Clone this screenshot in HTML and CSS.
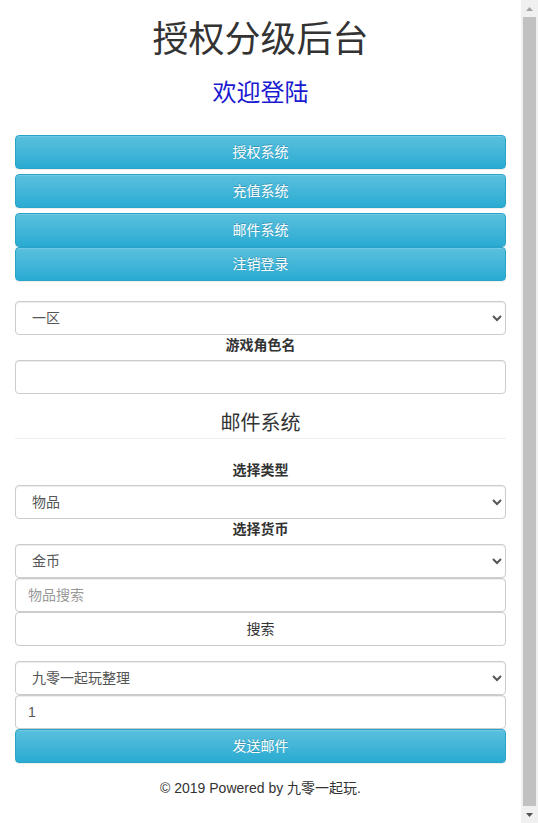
FILE: index.html
```html
<!DOCTYPE html>
<html lang="zh-CN">
<head>
  <meta charset="UTF-8" />
  <meta name="viewport" content="width=device-width, initial-scale=1.0"/>
  <title>授权分级后台</title>
  <link rel="stylesheet" href="styles.css">
</head>
<body>

  <div class="page">
    <div class="container">
      <h1 class="title">授权分级后台</h1>
      <h3 class="welcome">欢迎登陆</h3>

      <!-- Menu -->
      <div class="menu">
        <a class="btn btn-info" href="#">授权系统</a>
        <a class="btn btn-info" href="#">充值系统</a>
        <a class="btn btn-info" href="#">邮件系统</a>
        <a class="btn btn-info btn-tight" href="#">注销登录</a>
      </div>

      <!-- Mail form -->
      <form class="mail-form" onsubmit="return false">
        <select class="form-control">
          <option>一区</option>
          <option>二区</option>
        </select>
        <label>游戏角色名</label>
        <input type="text" class="form-control" />

        <h4 class="section-title">邮件系统</h4>

        <label>选择类型</label>
        <select class="form-control">
          <option>物品</option>
          <option>货币</option>
        </select>
        <label>选择货币</label>
        <select class="form-control">
          <option>金币</option>
          <option>钻石</option>
        </select>
        <input type="text" class="form-control" placeholder="物品搜索" />
        <button type="button" class="btn btn-default">搜索</button>

        <select class="form-control group-gap">
          <option>九零一起玩整理</option>
        </select>
        <input type="text" class="form-control" value="1" />
        <button type="submit" class="btn btn-info">发送邮件</button>
      </form>

      <p class="footer">© 2019 Powered by 九零一起玩.</p>
    </div>

    <!-- window scrollbar -->
    <div class="scrollbar">
      <span class="arrow">
        <svg width="7" height="4" viewBox="0 0 7 4"><path d="M0 4L3.5 0L7 4z" fill="#a3a3a3"/></svg>
      </span>
      <span class="thumb"></span>
      <span class="arrow">
        <svg width="7" height="4" viewBox="0 0 7 4"><path d="M0 0L3.5 4L7 0z" fill="#505050"/></svg>
      </span>
    </div>
  </div>

</body>
</html>
```

FILE: styles.css
```css
* {
  box-sizing: border-box;
}

body {
  margin: 0;
  font-family: "Liberation Sans", "Noto Sans CJK SC", sans-serif;
  font-size: 14px;
  line-height: 20px;
  color: #333;
  background: #fff;
}

.page {
  display: flex;
  height: 100vh;
  overflow: hidden;
}

.container {
  flex: 1;
  padding: 0 15px;
}

.scrollbar {
  width: 17px;
  display: flex;
  flex-direction: column;
  background: #f0f0f0;
}

.scrollbar .arrow {
  height: 17px;
  display: flex;
  align-items: center;
  justify-content: center;
}

.scrollbar .thumb {
  flex: 1;
  margin: 0 2px;
  background: #c1c1c1;
}

.title {
  margin: 20px 0 0;
  font-size: 36px;
  line-height: 40px;
  font-weight: 400;
  text-align: center;
  color: #333;
}

.welcome {
  margin: 20px 0 0;
  font-size: 24px;
  line-height: 26px;
  font-weight: 400;
  text-align: center;
  color: #1a1ad0;
}

.menu {
  margin: 29px 0 20px;
  display: flex;
  flex-direction: column;
  gap: 5px;
}

.menu .btn-tight {
  margin-top: -5px;
}

.btn {
  display: block;
  width: 100%;
  height: 34px;
  padding: 6px 12px;
  font-family: inherit;
  font-size: 14px;
  line-height: 20px;
  text-align: center;
  text-decoration: none;
  border: 1px solid transparent;
  border-radius: 4px;
  cursor: pointer;
}

.btn-info {
  color: #fff;
  background-image: linear-gradient(to bottom, #5bc0de 0%, #2aabd2 100%);
  border-color: #28a4c9;
  text-shadow: 0 -1px 0 rgba(0, 0, 0, 0.2);
  box-shadow: inset 0 1px 0 rgba(255, 255, 255, 0.15), 0 1px 1px rgba(0, 0, 0, 0.075);
}

.btn-default {
  color: #333;
  background: #fff;
  border-color: #ccc;
}

.mail-form {
  display: flex;
  flex-direction: column;
}

.form-control {
  display: block;
  width: 100%;
  height: 34px;
  padding: 6px 12px;
  font-family: inherit;
  font-size: 14px;
  line-height: 20px;
  color: #555;
  background-color: #fff;
  border: 1px solid #ccc;
  border-radius: 4px;
  box-shadow: inset 0 1px 1px rgba(0, 0, 0, 0.075);
}

.form-control::placeholder {
  color: #999;
}

label {
  display: block;
  margin: 0 0 5px;
  font-weight: bold;
  text-align: center;
  color: #333;
}

.section-title {
  margin: 18px 0 21px;
  padding-bottom: 4px;
  font-size: 20px;
  line-height: 22px;
  font-weight: 400;
  text-align: center;
  border-bottom: 1px solid #eee;
}

.group-gap {
  margin-top: 15px;
}

.footer {
  margin: 15px 0 0;
  text-align: center;
  color: #333;
}
```
